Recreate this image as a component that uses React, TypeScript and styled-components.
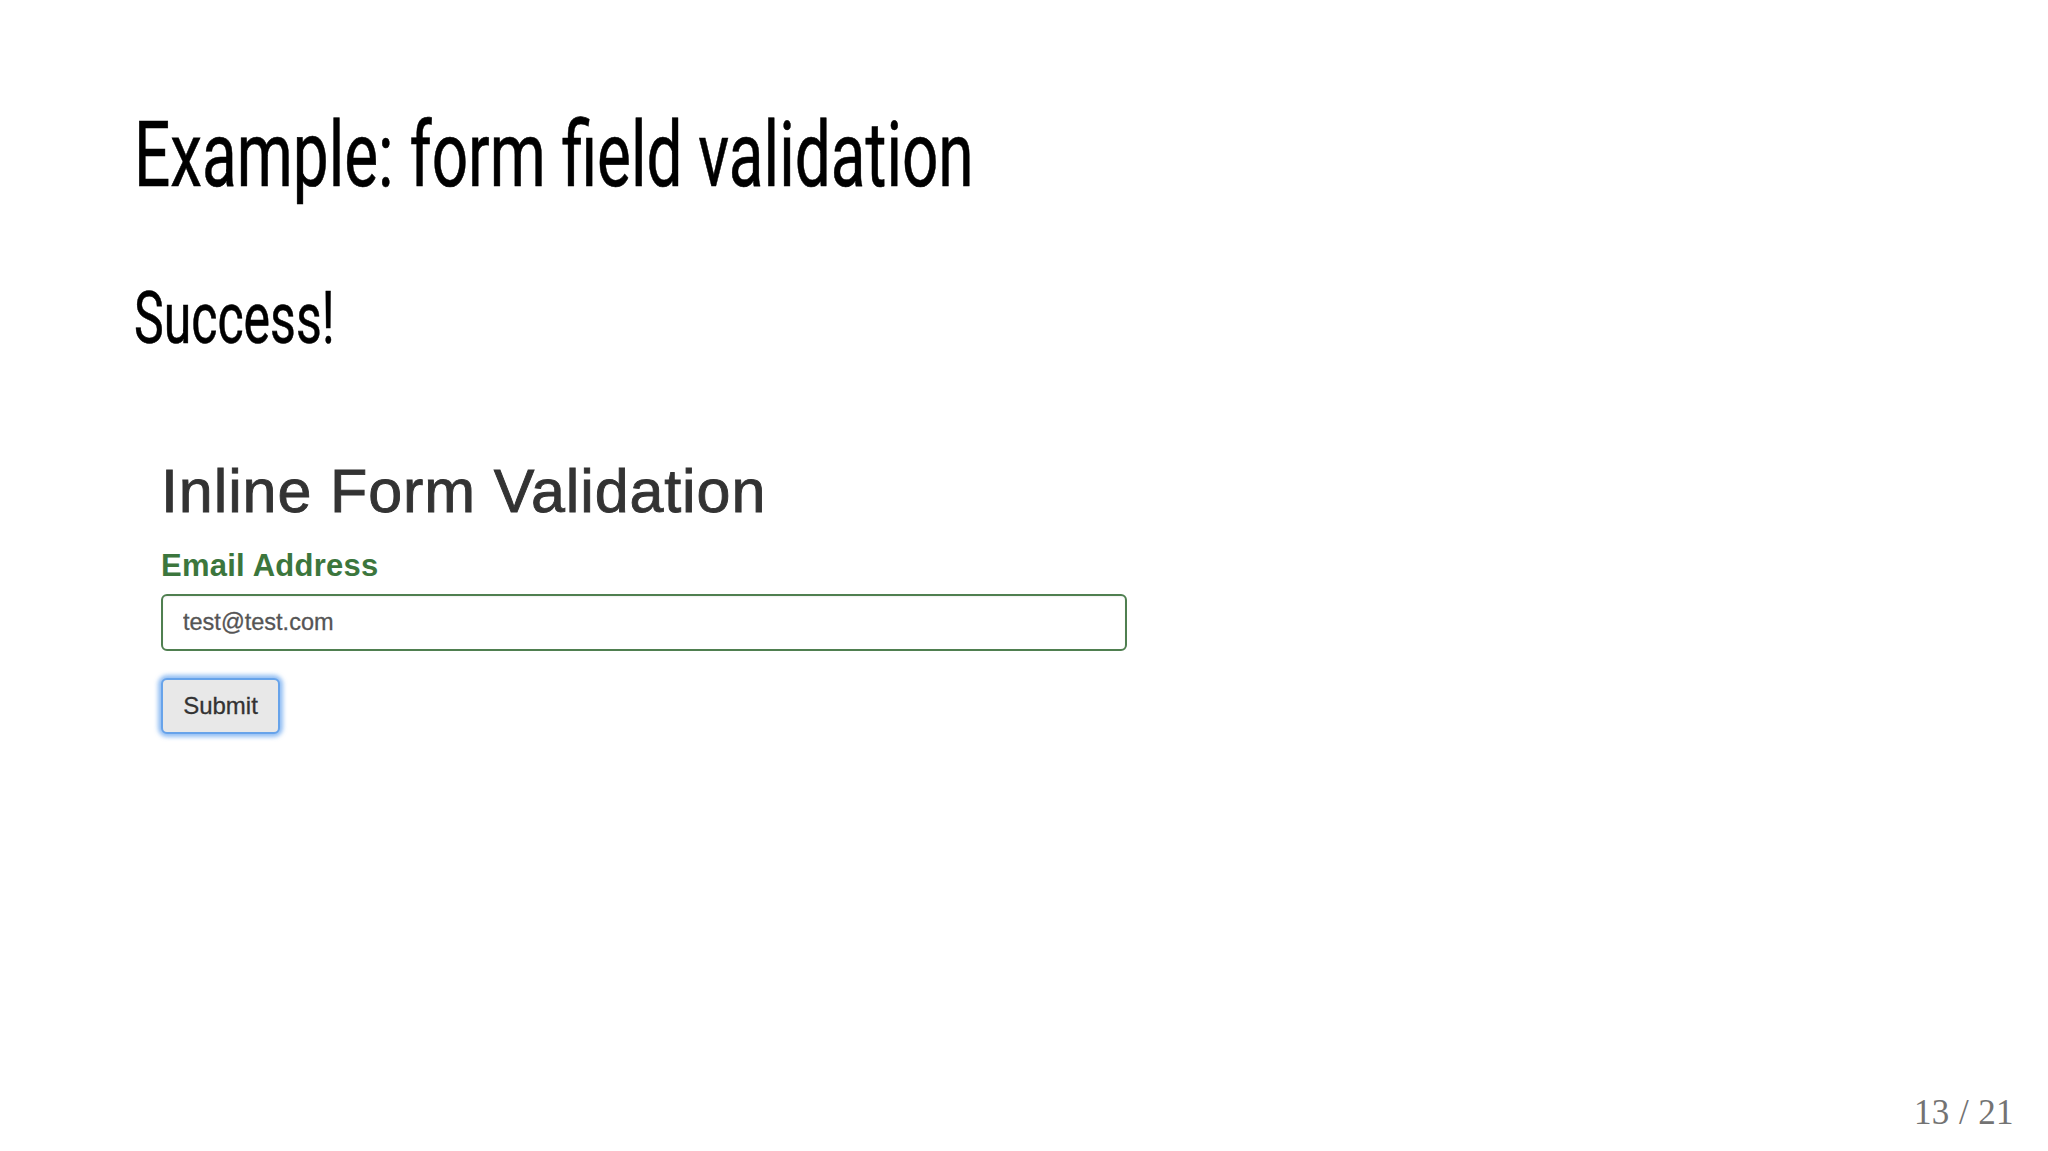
import React from "react";
import styled, { createGlobalStyle } from "styled-components";

const GlobalStyle = createGlobalStyle`
	html,
	body {
		margin: 0;
		padding: 0;
		background: #ffffff;
		overflow: hidden;
	}

	* {
		box-sizing: border-box;
	}
`;

const Slide = styled("main")`
	position: relative;
	width: 2048px;
	height: 1151px;
	padding: 111px 0 0 134px;
	background: #ffffff;
	font-family: Roboto, "Liberation Sans", sans-serif;
	color: #000000;
`;

interface ICondensedProps {
	$size: number;
	$squeeze: number;
}

// the slide deck uses a very narrow display face; squeeze a regular one to match
const Condensed = styled("h1")<ICondensedProps>`
	margin: 0;
	font-family: Roboto, "DejaVu Sans", sans-serif;
	font-weight: 400;
	font-size: ${({ $size }) => $size}px;
	line-height: ${({ $size }) => $size}px;
	white-space: nowrap;
	-webkit-text-stroke: 0.6px #000000;
	transform: scaleX(${({ $squeeze }) => $squeeze});
	transform-origin: left center;
`;

const Subtitle = styled(Condensed)`
	margin-top: 81px;
`;

const Demo = styled("section")`
	display: flex;
	flex-direction: column;
	align-items: flex-start;
	margin: 106px 0 0 27px;
	font-family: "Liberation Sans", Arial, sans-serif;
`;

const DemoTitle = styled("h2")`
	margin: 0;
	font-size: 61px;
	line-height: 61px;
	font-weight: 400;
	color: #333333;
	letter-spacing: 0.9px;
	-webkit-text-stroke: 0.9px #333333;
`;

const FieldLabel = styled("label")`
	margin-top: 29px;
	font-size: 31px;
	line-height: 30px;
	font-weight: 700;
	color: #3c763d;
	letter-spacing: 0.25px;
`;

const TextField = styled("input")`
	margin-top: 13px;
	width: 966px;
	height: 57px;
	padding: 0 0 0 20px;
	border: 2px solid #4f7f50;
	border-radius: 6px;
	background: #ffffff;
	box-shadow: inset 0 1px 2px rgba(0, 0, 0, 0.06);
	font-family: "Liberation Sans", Arial, sans-serif;
	font-size: 23.5px;
	color: #555555;
	-webkit-text-stroke: 0.3px #555555;
	outline: none;
`;

const SubmitButton = styled("button")`
	margin-top: 27px;
	width: 119px;
	height: 56px;
	padding: 0;
	border: 2px solid #67a3ea;
	border-radius: 6px;
	background: #e8e8e8;
	box-shadow: 0 0 4px 3px rgba(100, 162, 238, 0.7);
	font-family: "Liberation Sans", Arial, sans-serif;
	font-size: 24px;
	color: #333333;
	-webkit-text-stroke: 0.3px #333333;
	text-align: center;
`;

const PageNumber = styled("div")`
	position: absolute;
	right: 34px;
	bottom: 21px;
	font-family: "Liberation Serif", "Times New Roman", serif;
	font-size: 35px;
	line-height: 35px;
	color: #737373;
	letter-spacing: 0.4px;
`;

export default function App() {
	return (
		<>
			<GlobalStyle />
			<Slide>
				<Condensed $size={90} $squeeze={0.71}>
					Example: form field validation
				</Condensed>

				<Subtitle as="h2" $size={73} $squeeze={0.685}>
					Success!
				</Subtitle>

				<Demo>
					<DemoTitle>Inline Form Validation</DemoTitle>
					<FieldLabel htmlFor="email">Email Address</FieldLabel>
					<TextField id="email" type="email" defaultValue="test@test.com" readOnly />
					<SubmitButton type="button">Submit</SubmitButton>
				</Demo>

				<PageNumber>13 / 21</PageNumber>
			</Slide>
		</>
	);
}
